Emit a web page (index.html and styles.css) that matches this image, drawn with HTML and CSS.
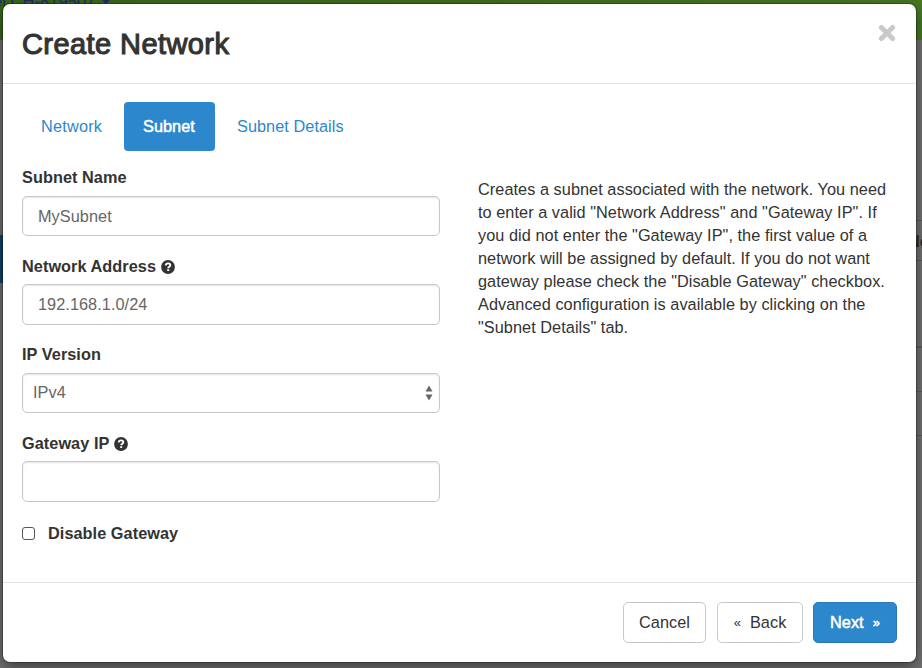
FILE: index.html
```html
<!DOCTYPE html>
<html lang="en">
<head>
<meta charset="utf-8">
<title>Create Network</title>
<link rel="stylesheet" href="styles.css">
</head>
<body>
<div class="backdrop">
  <div class="topbar"><span class="project">el CH-819507</span><span class="caret"></span></div>
  <div class="side-active"></div>
  <div class="table-edge"><div class="table-head"><span>Ne</span></div><div class="row tall"></div><div class="row"></div><div class="row"></div></div>
</div>
<main class="modal">
  <header class="modal-header">
    <h1>Create Network</h1>
    <button class="close" aria-label="Close"><svg width="18" height="18" viewBox="0 0 18 18"><path d="M3.4 3.4 14.6 14.6M14.6 3.4 3.4 14.6" stroke="#c9c9c9" stroke-width="5" stroke-linecap="round"/></svg></button>
  </header>
  <section class="modal-body">
    <nav class="tabs">
      <a class="tab">Network</a>
      <a class="tab active">Subnet</a>
      <a class="tab">Subnet Details</a>
    </nav>
    <div class="columns">
      <form class="fields">
        <label class="label">Subnet Name</label>
        <div class="control">MySubnet</div>
        <label class="label">Network Address <svg class="help" width="14" height="14" viewBox="0 0 14 14"><circle cx="7" cy="7" r="6.9" fill="#333"/><path d="M4.7 5.3C4.9 3.9 5.9 3.4 7.1 3.4c1.3 0 2.2.8 2.2 1.8 0 1.6-2.1 1.5-2.1 3.1" fill="none" stroke="#fff" stroke-width="1.9"/><path d="M6.2 9.2h2v1.8h-2z" fill="#fff"/></svg></label>
        <div class="control">192.168.1.0/24</div>
        <label class="label">IP Version</label>
        <div class="control select">IPv4<svg width="8" height="16" viewBox="0 0 8 16"><path d="M4 .5 7.5 6.6h-7zM4 15.500.5 9.400h7z" fill="#666"/></svg></div>
        <label class="label">Gateway IP <svg class="help" width="14" height="14" viewBox="0 0 14 14"><circle cx="7" cy="7" r="6.9" fill="#333"/><path d="M4.7 5.3C4.9 3.9 5.9 3.4 7.1 3.4c1.3 0 2.2.8 2.2 1.8 0 1.6-2.1 1.5-2.1 3.1" fill="none" stroke="#fff" stroke-width="1.9"/><path d="M6.2 9.2h2v1.8h-2z" fill="#fff"/></svg></label>
        <div class="control"></div>
        <label class="check"><span class="box"></span><span>Disable Gateway</span></label>
      </form>
      <p class="description">Creates a subnet associated with the network. You need<br>to enter a valid "Network Address" and "Gateway IP". If<br>you did not enter the "Gateway IP", the first value of a<br>network will be assigned by default. If you do not want<br>gateway please check the "Disable Gateway" checkbox.<br>Advanced configuration is available by clicking on the<br>"Subnet Details" tab.</p>
    </div>
  </section>
  <footer class="modal-footer">
    <button class="btn cancel">Cancel</button>
    <button class="btn back"><span class="chev">«</span>Back</button>
    <button class="btn next">Next<span class="chev">»</span></button>
  </footer>
</main>
</body>
</html>
```

FILE: styles.css
```css
* { box-sizing: border-box; }
body {
  margin: 0;
  width: 922px;
  height: 668px;
  overflow: hidden;
  padding: 4px 6px 6px 3px;
  background: #727272;
  font: 16.3px/23px "Liberation Sans", Arial, sans-serif;
  letter-spacing: .05px;
  color: #333;
}
.backdrop { position: absolute; inset: 0; overflow: hidden; }
.topbar { height: 40px; background: linear-gradient(90deg, #36681b, #487923); color: #28286e; }
.project { position: absolute; left: -7px; top: -9px; font-size: 16.5px; line-height: 20px; }
.caret { position: absolute; left: 101px; top: -1px; border: 5px solid transparent; border-top-color: #28286e; }
.side-active { position: absolute; left: 0; top: 235px; width: 10px; height: 48px; background: #13436b; }
.table-edge { position: absolute; right: 0; top: 220px; width: 8px; border-top: 1px solid #5d5d5d; }
.table-head { height: 40px; border-bottom: 1px solid #5d5d5d; font-weight: bold; line-height: 40px; overflow: hidden; color: #302b27; }
.table-head span { margin-left: -6px; }
.row { height: 44px; border-bottom: 1px solid #5d5d5d; }
.row.tall { height: 87px; border-bottom-width: 2px; }
.modal {
  position: relative;
  display: flex;
  flex-direction: column;
  width: 913px;
  height: 658px;
  background: #fff;
  border-radius: 7px;
  box-shadow: 0 0 0 1px rgba(0,0,0,.25), 0 5px 15px rgba(0,0,0,.5);
}
.modal-header {
  display: flex;
  justify-content: space-between;
  height: 80px;
  padding: 20px 20px 0 19px;
  border-bottom: 1px solid #e2e2e2;
}
h1 { margin: 0; font-size: 29px; line-height: 40px; font-weight: normal; letter-spacing: .42px; -webkit-text-stroke: 1.1px #333; }
.close { width: 18px; height: 18px; padding: 0; border: 0; background: none; }
.close svg { display: block; }
.modal-body { flex: 1; padding: 18px 19px 0; }
.tabs { display: flex; gap: 3px; height: 49px; }
.tab { padding: 13px 19px; border-radius: 4px; color: #2d87cd; white-space: nowrap; }
.tab:first-child { width: 99px; letter-spacing: .2px; }
.tab.active { width: 91px; background: #2d87cd; color: #fff; -webkit-text-stroke: .5px #fff; }
.columns { display: flex; gap: 38px; }
.fields { width: 418px; padding-top: 15px; }
.label { display: block; height: 30px; font-weight: bold; white-space: nowrap; }
.control + .label { padding-top: .6px; }
.help { vertical-align: -2px; }
.control {
  height: 40.4px;
  margin-bottom: 18px;
  padding: 8px 15px;
  border: 1px solid #c8c8c8;
  border-radius: 5px;
  box-shadow: inset 0 1px 2px rgba(0,0,0,.1);
  color: #666;
}
.select { display: flex; justify-content: space-between; align-items: center; padding: 0 6px 0 10px; }
.check { display: flex; align-items: center; gap: 13px; height: 23px; margin-top: 20px; font-weight: bold; }
.box { width: 13px; height: 13px; border: 1px solid #555; border-radius: 3px; }
.description { margin: 27px 0 0; white-space: nowrap; }
.modal-footer {
  display: flex;
  justify-content: flex-end;
  height: 80px;
  padding: 19px 19px 0;
  border-top: 1px solid #e2e2e2;
}
.btn {
  height: 41px;
  padding: 0;
  border: 1px solid #c8c8c8;
  border-radius: 5px;
  background: #fff;
  color: #333;
  font: inherit;
  letter-spacing: inherit;
}
.cancel { width: 83px; margin-right: 11px; }
.back { width: 86px; margin-right: 10px; }
.next { width: 84px; background: #2d87cd; border-color: #2879bb; color: #fff; -webkit-text-stroke: .5px #fff; }
.chev { font-size: 13px; position: relative; top: -1px; }
.back .chev { margin-right: 9px; }
.next .chev { margin-left: 9px; }
```
